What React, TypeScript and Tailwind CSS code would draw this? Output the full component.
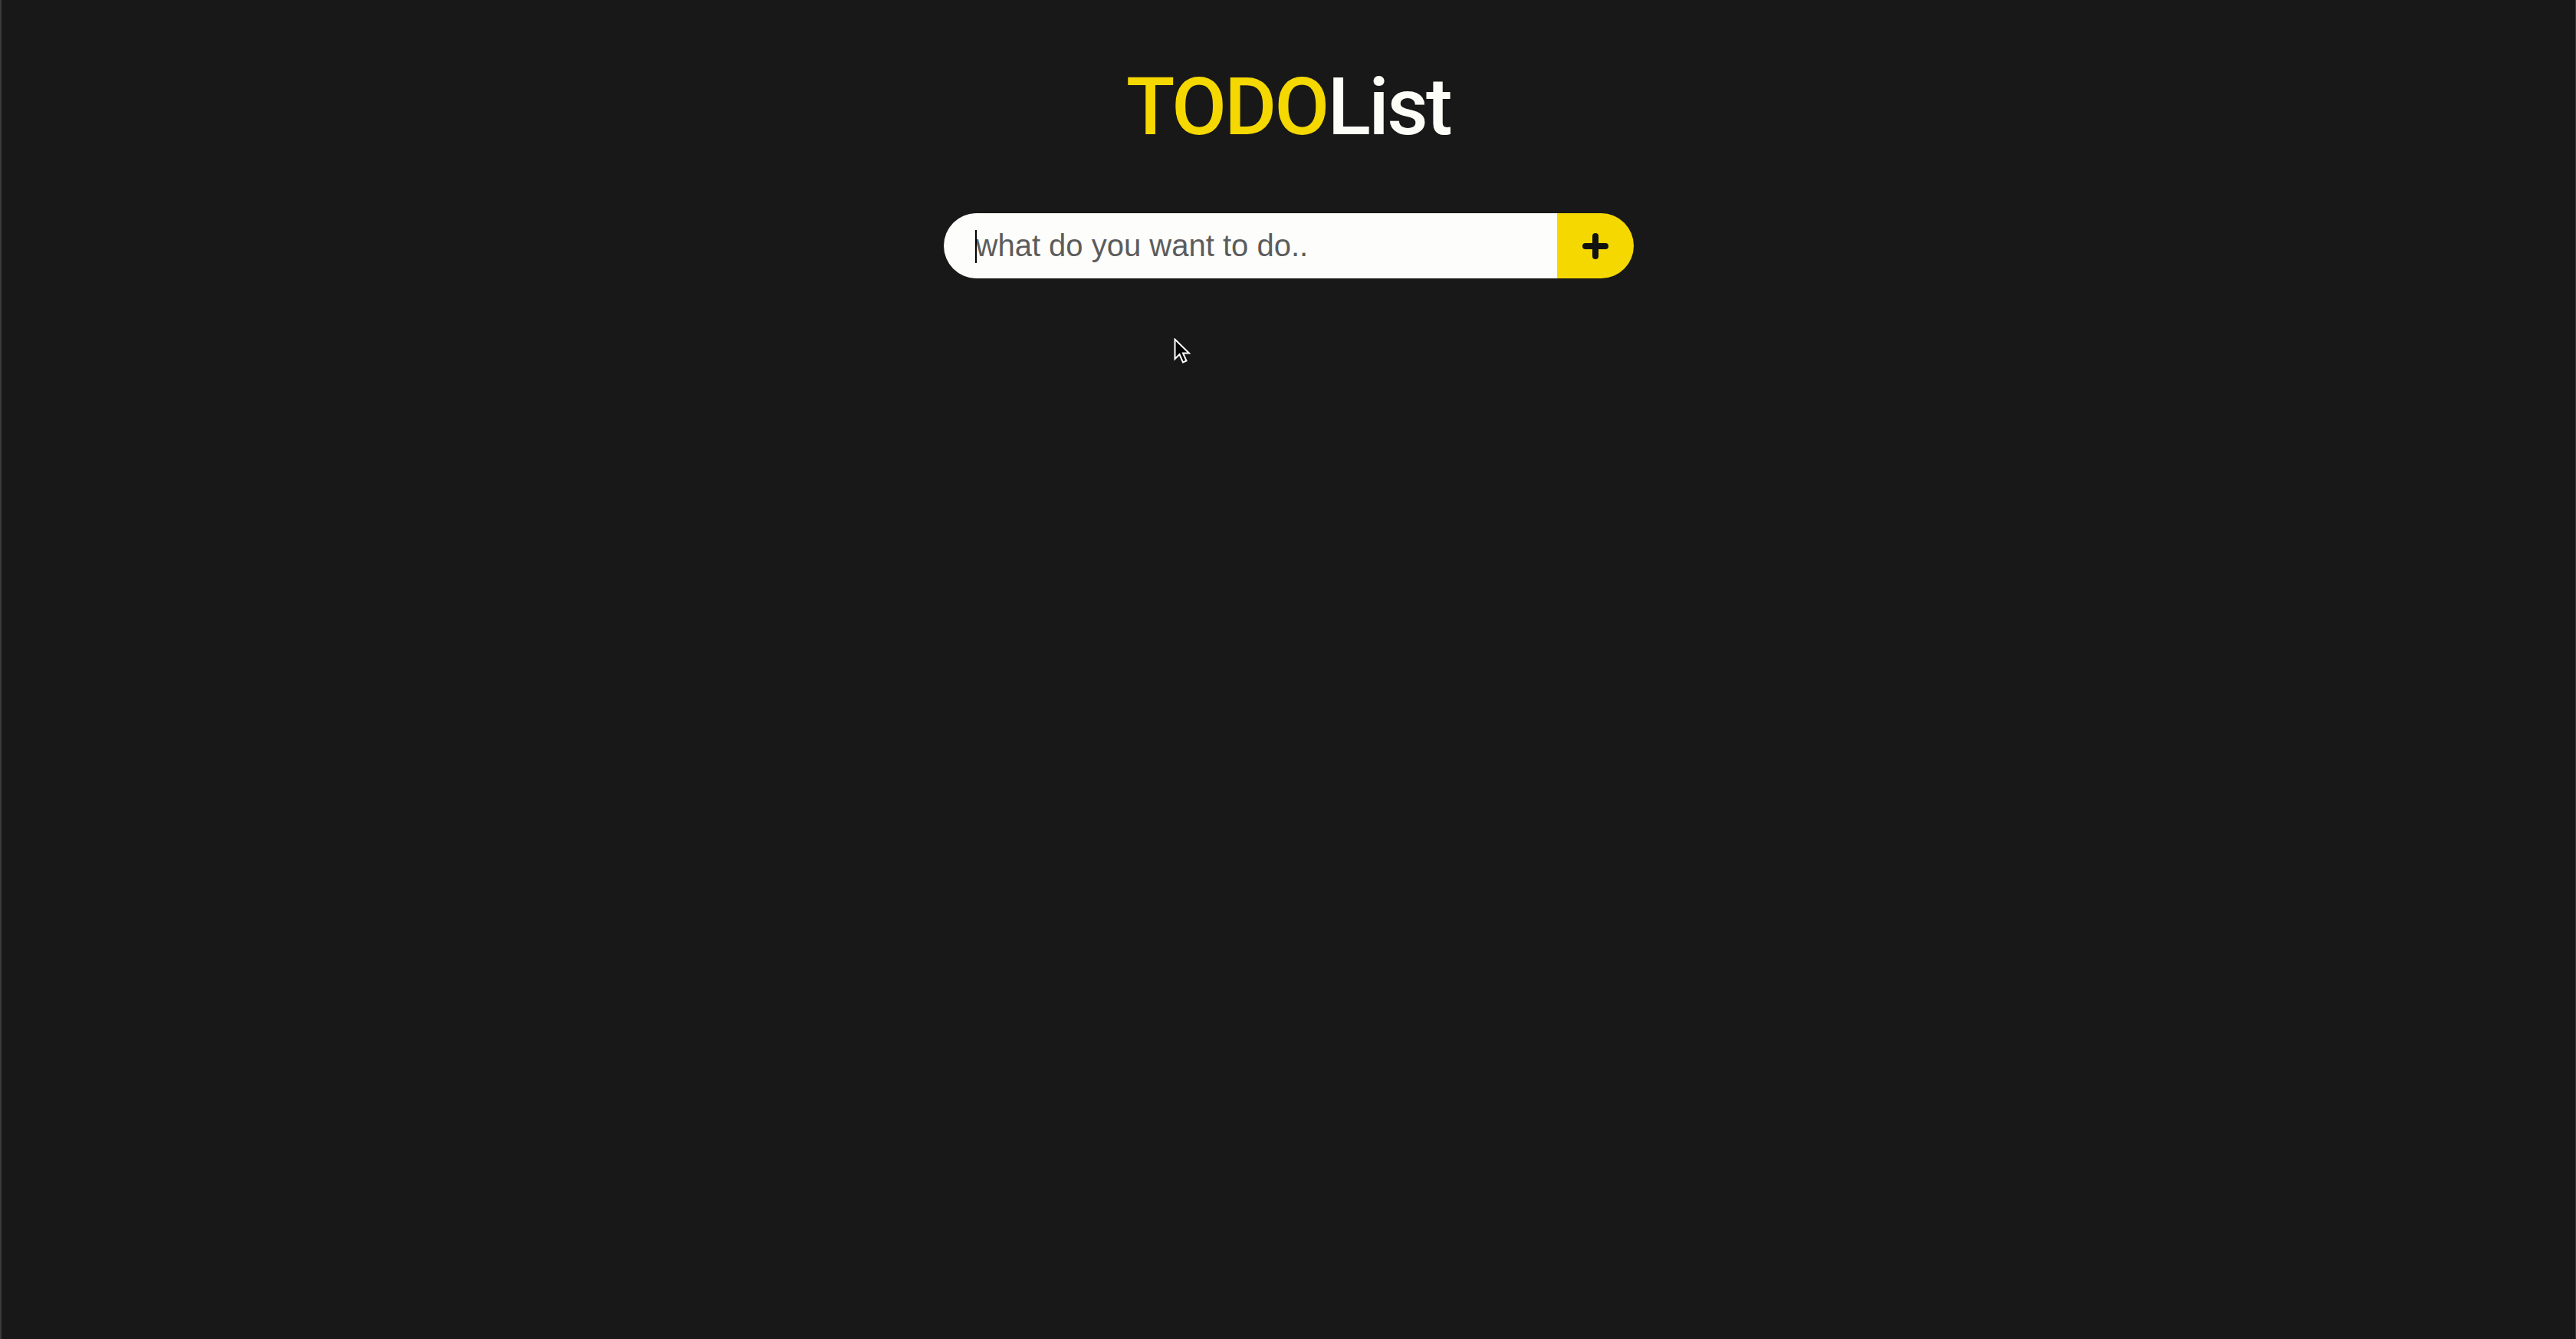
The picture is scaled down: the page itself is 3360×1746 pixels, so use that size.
import React, { useState } from 'react'

const App = () => {
    const [todo, setTodo] = useState('');

    function submitHandler(e: React.FormEvent) {
        e.preventDefault();
        setTodo('');
    }

    return (
        <section className="relative min-h-screen w-full bg-[#181818] border-l-2 border-r border-[#3b3b38] font-['Roboto',sans-serif]">
            <div className="flex flex-col items-center pt-[86px]">
                <h1 className="text-[104px] leading-[107px] font-medium tracking-[-0.025em]">
                    <span className="text-[#f4d800]">TODO</span>
                    <span className="text-[#fdfdf8]">List</span>
                </h1>
                <form className="flex mt-[85px] w-[900px] h-[85px]" onSubmit={submitHandler}>
                    <div className="relative flex-1 h-full">
                        <input
                            type="text"
                            value={todo}
                            onChange={(e) => setTodo(e.target.value)}
                            placeholder="what do you want to do.."
                            className="w-full h-full bg-[#fdfdfb] rounded-l-full pl-[42px] pr-4 text-[40px] text-[#222] placeholder:text-[#5c5c5c] font-['Liberation_Sans',Arial,sans-serif] outline-none caret-black"
                        />
                        {/* blinking caret from the screenshot */}
                        {todo === '' && <span className="absolute left-[41px] top-[22px] w-[2px] h-[43px] bg-black pointer-events-none"></span>}
                    </div>
                    <button type="submit" className="w-[100px] h-full bg-[#f4d800] rounded-r-full flex items-center justify-center">
                        <svg width="34" height="34" viewBox="0 0 34 34" fill="none" stroke="#111" strokeWidth="8" strokeLinecap="round">
                            <path d="M4 17h26M17 4v26" />
                        </svg>
                    </button>
                </form>
            </div>
            <svg className="absolute left-[1529px] top-[441px]" width="24" height="36" viewBox="0 0 24 36">
                <path d="M1.5 1.5 L1.5 27 L7.5 21 L12 31.5 L16.5 29.5 L12 19.5 L20 19.5 Z" fill="#000" stroke="#fff" strokeWidth="2" strokeLinejoin="miter" />
            </svg>
        </section>
    )
}

export default App
